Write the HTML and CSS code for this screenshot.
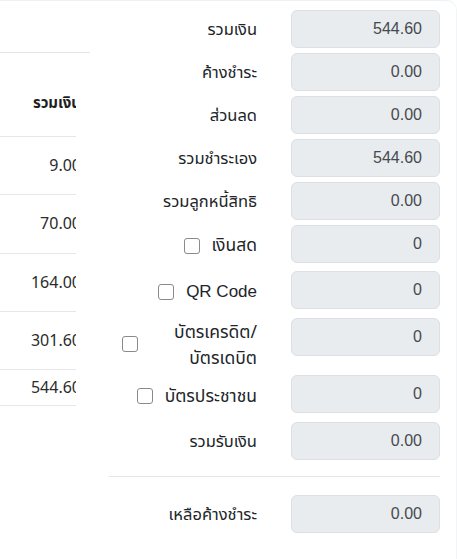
FILE: index.html
```html
<!DOCTYPE html>
<html lang="th">
<head>
    <meta charset="UTF-8">
    <meta name="viewport" content="width=device-width, initial-scale=1.0">
    <title>สรุปการชำระเงิน</title>
    <link rel="stylesheet" href="styles.css">
</head>
<body>
    <div class="card">
        <div class="left">
            <div class="left-top"></div>
            <div class="tbl-wrap">
                <div class="tbl">
                    <div class="th">รวมเงิน</div>
                    <div class="td">9.00</div>
                    <div class="td">70.00</div>
                    <div class="td">164.00</div>
                    <div class="td">301.60</div>
                    <div class="td total">544.60</div>
                </div>
            </div>
        </div>

        <div class="panel">
            <div class="row">
                <label class="label">รวมเงิน</label>
                <input class="field" type="text" value="544.60" readonly>
            </div>
            <div class="row">
                <label class="label">ค้างชำระ</label>
                <input class="field" type="text" value="0.00" readonly>
            </div>
            <div class="row">
                <label class="label">ส่วนลด</label>
                <input class="field" type="text" value="0.00" readonly>
            </div>
            <div class="row">
                <label class="label">รวมชำระเอง</label>
                <input class="field" type="text" value="544.60" readonly>
            </div>
            <div class="row">
                <label class="label">รวมลูกหนี้สิทธิ</label>
                <input class="field" type="text" value="0.00" readonly>
            </div>
            <div class="row">
                <label class="label check first"><input type="checkbox"><span>เงินสด</span></label>
                <input class="field" type="text" value="0" readonly>
            </div>
            <div class="row">
                <label class="label check"><input type="checkbox"><span class="en">QR Code</span></label>
                <input class="field" type="text" value="0" readonly>
            </div>
            <div class="row">
                <label class="label check"><input type="checkbox"><span class="wrap">บัตรเครดิต/<br>บัตรเดบิต</span></label>
                <input class="field" type="text" value="0" readonly>
            </div>
            <div class="row">
                <label class="label check"><input type="checkbox"><span>บัตรประชาชน</span></label>
                <input class="field" type="text" value="0" readonly>
            </div>
            <div class="row">
                <label class="label">รวมรับเงิน</label>
                <input class="field" type="text" value="0.00" readonly>
            </div>

            <hr>

            <div class="row">
                <label class="label">เหลือค้างชำระ</label>
                <input class="field" type="text" value="0.00" readonly>
            </div>
        </div>
    </div>
</body>
</html>
```

FILE: styles.css
```css
body {
    margin: 0;
    background: #fff;
    font-family: "Noto Sans", "Noto Sans Thai", "Liberation Sans", sans-serif;
    color: #212529;
}
.card {
    display: flex;
    height: 558px;
    border-top: 1px solid #eef0f2;
    border-right: 1px solid #f3f4f6;
    border-top-right-radius: 10px;
    overflow: hidden;
}

/* ตารางด้านหลัง (ถูกตัด) */
.left {
    width: 90px;
    flex-shrink: 0;
}
.left-top {
    height: 51px;
    border-bottom: 1px solid #e3e5ea;
}
.tbl-wrap {
    width: 76px;
    overflow: hidden;
}
.tbl {
    width: 97px;
}
.th,
.td {
    box-sizing: border-box;
    padding-right: 16px;
    text-align: right;
    white-space: nowrap;
    border-bottom: 1px solid #e6e7e9;
    font-size: 15px;
    color: #2b2b2b;
}
.th {
    height: 84px;
    display: flex;
    align-items: flex-end;
    justify-content: flex-end;
    padding-bottom: 21px;
    font-weight: bold;
    color: #1f1f1f;
}
.td {
    height: 58.3px;
    line-height: 57px;
    font-size: 16px;
}
.td.total {
    height: 36px;
    line-height: 35px;
}

/* แผงสรุป */
.panel {
    width: 331px;
    margin-left: 19px;
    padding-top: 9px;
}
.row {
    display: flex;
    align-items: flex-start;
    margin-bottom: 5px;
}
.label {
    box-sizing: border-box;
    width: 148px;
    min-height: 38px;
    padding-left: 13px;
    display: flex;
    align-items: center;
    justify-content: flex-end;
    text-align: right;
    font-size: 16.5px;
}
.label.check {
    min-height: 42px;
    gap: 12px;
    font-size: 17.5px;
}
.label.check.first {
    min-height: 41px;
}
.label input[type="checkbox"] {
    appearance: none;
    -webkit-appearance: none;
    flex-shrink: 0;
    width: 16px;
    height: 16px;
    margin: 0;
    border: 1px solid #8a8a8a;
    border-radius: 3px;
    background: #fff;
}
.label .en {
    font-family: "Liberation Sans", sans-serif;
    font-size: 17px;
}
.label .wrap {
    flex: 1;
    line-height: 26px;
}
.field {
    box-sizing: border-box;
    width: 149px;
    height: 38px;
    margin: 0 0 0 34px;
    padding: 0 17px 0 10px;
    border: 1px solid #dcdfe3;
    border-radius: 6px;
    background: #e9ecef;
    text-align: right;
    font-family: "Liberation Sans", sans-serif;
    font-size: 16px;
    color: #454a50;
    outline: none;
}
hr {
    border: none;
    border-top: 1px solid #e4e6e9;
    margin: 16px 0 18px;
}
```
